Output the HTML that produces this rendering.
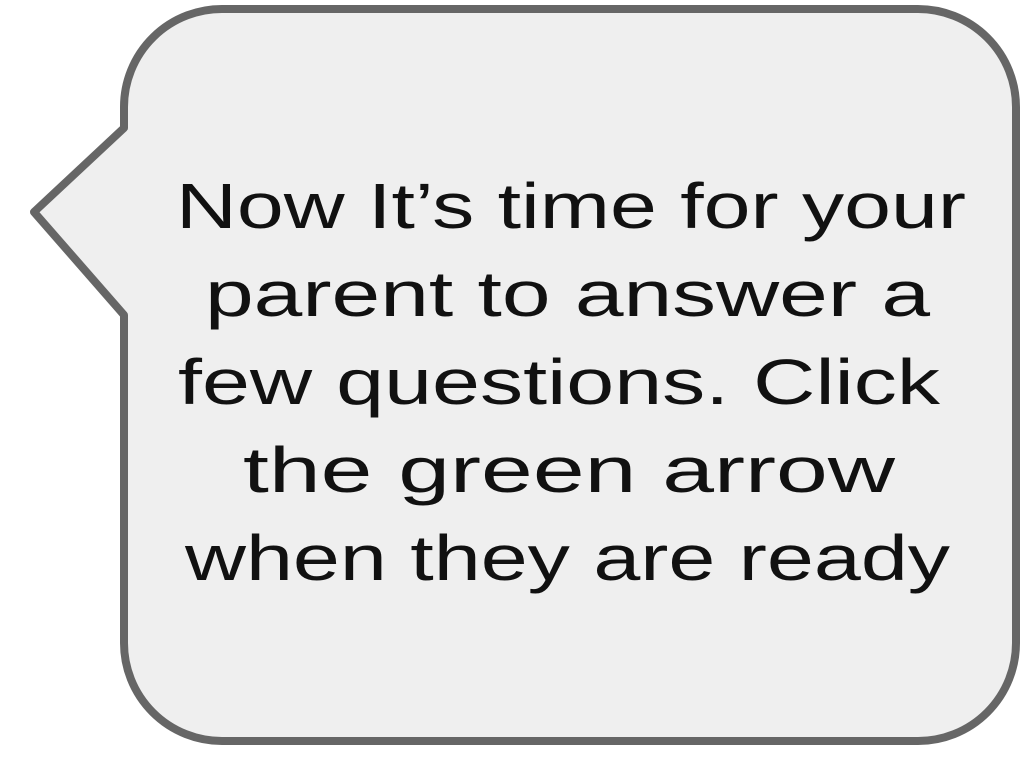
<!DOCTYPE html>
<html><head><meta charset="utf-8"><style>
html,body{margin:0;padding:0;background:#fff;width:1024px;height:768px;overflow:hidden}
svg{display:block}
text{font-family:"Liberation Sans",sans-serif;font-size:64px;fill:#111}
</style></head><body>
<svg width="1024" height="768" viewBox="0 0 1024 768">
<path d="M224,9 H918 A98 98 0 0 1 1016,107 V643 A98 98 0 0 1 918,741 H222 A98 98 0 0 1 124,643 V315 L34,212 L124,128 V107 A98 98 0 0 1 224,9 Z" fill="#efefef" stroke="#666" stroke-width="8" stroke-linejoin="round"/>
<text x="176" y="228" textLength="790" lengthAdjust="spacingAndGlyphs">Now It’s time for your</text>
<text x="205" y="316" textLength="725" lengthAdjust="spacingAndGlyphs">parent to answer a</text>
<text x="178" y="404" textLength="762" lengthAdjust="spacingAndGlyphs">few questions. Click</text>
<text x="243" y="492" textLength="652" lengthAdjust="spacingAndGlyphs">the green arrow</text>
<text x="185" y="580" textLength="765" lengthAdjust="spacingAndGlyphs">when they are ready</text>
</svg>
</body></html>
